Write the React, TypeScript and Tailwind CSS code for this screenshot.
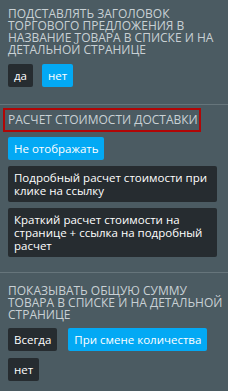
import * as React from "react";

type Opt = { label: string; active?: boolean };

function Pill({ label, active }: Opt) {
  return (
    <span
      className={
        "inline-block rounded-[2px] px-[6px] py-[5px] text-[11.5px] leading-[13px] font-medium text-white " +
        (active ? "bg-[#03a9f4]" : "bg-[#262c30]")
      }
    >
      {label}
    </span>
  );
}

function Heading({ lines }: { lines: string[] }) {
  return (
    <p className="text-[12px] leading-[12px] uppercase whitespace-nowrap text-[#c9d1d5]">
      {lines.map((l, i) => (
        <React.Fragment key={i}>
          {i > 0 && <br />}
          {l}
        </React.Fragment>
      ))}
    </p>
  );
}

export default function App() {
  return (
    <div
      className="w-[228px] h-[391px] overflow-hidden bg-[#4b5b62]"
      style={{ fontFamily: '"Open Sans", "Liberation Sans", sans-serif' }}
    >
      {/* секция 1 */}
      <div className="px-[8px] pt-[8px] pb-[17px]">
        <Heading
          lines={[
            "Подставлять заголовок",
            "торгового предложения в",
            "название товара в списке и на",
            "детальной странице",
          ]}
        />
        <div className="mt-[8px] flex flex-wrap gap-[9px]">
          <Pill label="да" />
          <Pill label="нет" active />
        </div>
      </div>

      <div className="h-px bg-[#66757b]" />

      {/* секция 2 */}
      <div className="px-[8px] pt-[3px] pb-[15px]">
        <div className="-ml-[5px] w-[198px] border-2 border-[#b10606] px-[3px] py-[4px]">
          <Heading lines={["Расчет стоимости доставки"]} />
        </div>
        <div className="mt-[5px] flex flex-col items-start gap-[6px]">
          <Pill label="Не отображать" active />
          <span className="w-[209px] rounded-[2px] bg-[#262c30] px-[6px] py-[5px] text-[11.5px] leading-[13px] font-medium text-white">
            Подробный расчет стоимости при клике на ссылку
          </span>
          <span className="w-[209px] rounded-[2px] bg-[#262c30] px-[6px] py-[5px] text-[11.5px] leading-[13px] font-medium text-white">
            Краткий расчет стоимости на странице + ссылка на подробный расчет
          </span>
        </div>
      </div>

      <div className="h-px bg-[#66757b]" />

      {/* секция 3 */}
      <div className="px-[8px] pt-[12px]">
        <Heading
          lines={[
            "Показывать общую сумму",
            "товара в списке и на детальной",
            "странице",
          ]}
        />
        <div className="mt-[7px] flex flex-wrap gap-x-[11px] gap-y-[7px]">
          <Pill label="Всегда" />
          <Pill label="При смене количества" active />
          <Pill label="нет" />
        </div>
      </div>
    </div>
  );
}
